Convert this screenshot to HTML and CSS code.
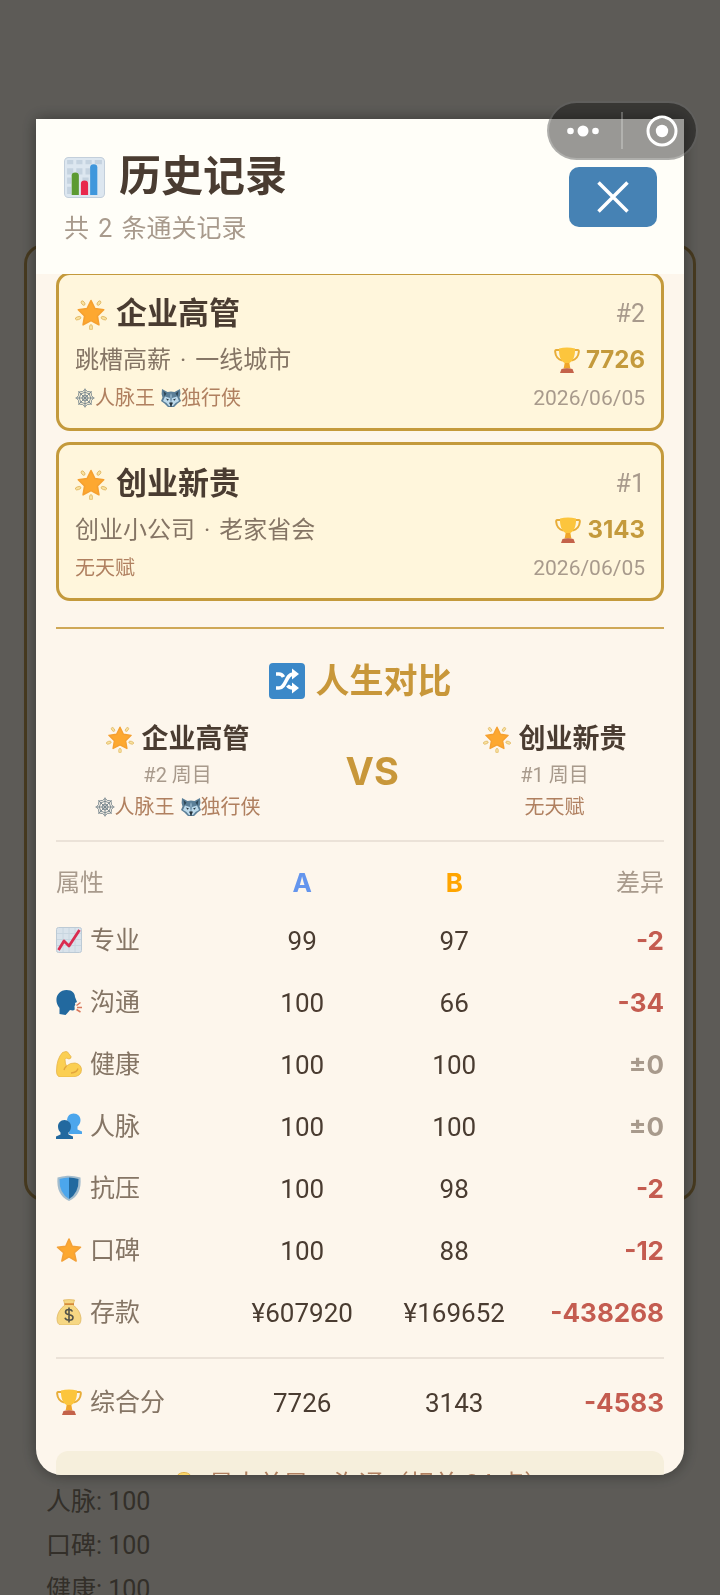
FILE: index.html
```
<!DOCTYPE html>
<html lang="zh-CN">

<head>
     <meta charset="UTF-8">
     <meta name="viewport" content="width=device-width, initial-scale=1.0">
     <title>历史记录</title>
     <link rel="stylesheet" href="styles.css">
</head>

<body>
     <!-- 图标 -->
     <svg class="sprite" aria-hidden="true">
          <symbol id="i-chart" viewBox="0 0 40 40">
               <rect x="0.5" y="0.5" width="39" height="39" rx="4" fill="#dde7f0" stroke="#c3cfdb" />
               <path d="M3 3h6v4H3zM12 3h6v4h-6zM21 3h6v4h-6zM30 3h7v4h-7zM3 11h6v6H3zM12 11h6v6h-6zM21 11h6v6h-6zM3 20h4v6H3zM18 20h6v4h-6zM3 29h4v7H3z" fill="#c5d3e0" />
               <path d="M7.500 37V18q0-3 3.500-3t3.500 3v19z" fill="#5c9a32" />
               <path d="M16.500 37V26q0-3 3.500-3t3.500 3v11z" fill="#e8294c" />
               <path d="M25.500 37V10q0-3 3.500-3t3.500 3v27z" fill="#3f97dc" />
          </symbol>
          <symbol id="i-glow" viewBox="0 0 32 32">
               <g fill="#f9e2a0" stroke="#dfb45c" stroke-width="0.8">
                    <ellipse cx="16" cy="2.500" rx="1.500" ry="2.500" transform="rotate(36 16 16)" />
                    <ellipse cx="16" cy="2.500" rx="1.500" ry="2.900" transform="rotate(108 16 16)" />
                    <ellipse cx="16" cy="2.500" rx="1.500" ry="2.900" transform="rotate(180 16 16)" />
                    <ellipse cx="16" cy="2.500" rx="1.500" ry="2.900" transform="rotate(252 16 16)" />
                    <ellipse cx="16" cy="2.500" rx="1.500" ry="2.500" transform="rotate(324 16 16)" />
               </g>
               <path d="M16 2.500l3.900 8 8.800 1.300-6.300 6.200 1.500 8.800-7.900-4.200-7.900 4.200 1.500-8.800-6.300-6.200 8.800-1.300z" fill="#fda830" stroke="#f5a030" stroke-width="1.600" stroke-linejoin="round" />
          </symbol>
          <symbol id="i-star" viewBox="0 0 26 26">
               <path d="M13 2l3.200 7.300 8.300.9-6.200 5.500 1.800 8.300L13 19.900 5.900 24l1.800-8.300L1.500 10.200l8.300-.9z" fill="#fda830" stroke="#f3a138" stroke-width="1.600" stroke-linejoin="round" />
          </symbol>
          <symbol id="i-cup" viewBox="0 0 26 26">
               <path d="M6.500 3H2.200q-1.200 0-1 2c.4 5 2.800 7.500 7.300 8.500M19.500 3h4.300q1.200 0 1 2c-.4 5-2.800 7.500-7.300 8.500" fill="none" stroke="#e8ad38" stroke-width="2" />
               <path d="M5 1.500q8-2 16 0c.3 7-1.500 12-5.500 14.500v4h-5v-4C6.500 13.500 4.700 8.500 5 1.500z" fill="#fcc53d" />
               <path d="M11 16h4l1.500 5.500h-7z" fill="#f0a52c" />
               <path d="M7.500 22q5.500-1.600 11 0l1.500 4H6z" fill="#c4624a" />
          </symbol>
          <symbol id="i-web" viewBox="0 0 20 20">
               <g fill="none" stroke="#73828a" stroke-width="0.9">
                    <path d="M10 0.500v19M0.500 10h19M3.300 3.300l13.400 13.400M16.700 3.300L3.300 16.700" />
                    <path d="M10 1.500l2.500 2 3.500.5.500 3.500 2 2.500-2 2.500-.5 3.500-3.500.5-2.500 2-2.500-2-3.500-.5-.5-3.500-2-2.500 2-2.500.5-3.500 3.500-.5z" />
                    <path d="M10 4.200l4.100 1.700 1.700 4.100-1.700 4.100-4.100 1.700-4.100-1.700L4.200 10l1.700-4.100z" />
                    <path d="M10 7l2.100.9L13 10l-.9 2.100-2.100.9-2.100-.9L7 10l.9-2.100z" />
               </g>
          </symbol>
          <symbol id="i-wolf" viewBox="0 0 20 20">
               <path d="M1 1l5.500 3q3.500-1 7 0L19 1q1 5-.5 8.500L20 13l-3.500 2.500L13 19H7l-3.500-3.500L0 13l1.500-3.500Q0 6 1 1z" fill="#5b7f98" />
               <path d="M2.500 3l3 2.500-2 3zM17.500 3l-3 2.500 2 3z" fill="#2f4858" />
               <path d="M10 5.500l1.200 4.500 4.800-1.500 2 4.500-3.500 2-2.500 3h-4l-2.500-3L2 13l2-4.500L8.800 10z" fill="#bcd9ea" />
               <path d="M10 4.500l1.200 6.500-1.200 4-1.200-4z" fill="#7d9fb6" />
               <path d="M5 10.500l3 1-1.500 1.200zM15 10.500l-3 1 1.500 1.200z" fill="#21323e" />
               <path d="M8 14.800q2-1 4 0L10.800 17v1.500H9.200V17z" fill="#26343d" />
          </symbol>
          <symbol id="i-shuffle" viewBox="0 0 36 36">
               <rect width="36" height="36" rx="4" fill="#3b88c8" />
               <path d="M7 11h3q3 0 4.500 3M7 25h3c7 0 7-14 14-14h1M18.500 22.500Q20.500 25 24 25h1" fill="none" stroke="#fff" stroke-width="3.600" />
               <path d="M23 5.500L30 11l-7 5.500zM23 19.500L30 25l-7 5.500z" fill="#fff" />
          </symbol>
          <symbol id="i-trend" viewBox="0 0 26 26">
               <rect x="0.500" y="0.500" width="25" height="25" rx="2" fill="#d9e3eb" stroke="#bccad5" />
               <path d="M1 6.500h24M1 12.500h24M1 18.500h24M7 1v24M13 1v24M19 1v24" stroke="#c8d6e0" />
               <path d="M2.500 23l5.500-9 5 5L23.500 3" fill="none" stroke="#da2c50" stroke-width="2.800" stroke-linejoin="round" />
          </symbol>
          <symbol id="i-speak" viewBox="0 0 26 26">
               <path d="M10.500 1c6 0 8.500 3.500 8.500 7l2 5-2 1 .3 2-.8 1 .2 3.500q-1.200 1.500-4.700.5L11 24.500 9.500 26l-6-1V19C-3 11 1.500 1 10.500 1z" fill="#22699f" />
               <path d="M20.500 16.500l4-3M21 18.500h5M20.500 20.500l4 2.500" stroke="#d9785c" stroke-width="1.500" />
          </symbol>
          <symbol id="i-arm" viewBox="0 0 26 26">
               <path d="M6.500 1.500L10 .5q2 0 3 2.500l2 2.500q.5 2-2 2.500L10.500 7 9 8.500q0 4 1.500 6.500 4-3.500 8.500-3 6 1 6.500 6.500Q25.500 26 15 26H5q-4.500 0-4.500-6Q.5 8 6.500 1.500z" fill="#fbcf52" stroke="#e6b448" stroke-width="0.800" />
               <path d="M15 22q6-.5 7-4.500M10.500 15q-2 2-2.500 4" fill="none" stroke="#e2a53c" stroke-width="1.300" />
          </symbol>
          <symbol id="i-people" viewBox="0 0 26 26">
               <path d="M17.500 0.500c4.500 0 7 3 7 6.500 0 3-1.200 5-3 6.500v3l4.500 2V21H13V9q-2-1-2-2.500 1-6 6.500-6z" fill="#4ca6ec" />
               <path d="M8.500 7c4 0 6.500 3 6.500 6.500 0 2.500-1 4.500-2.500 6v2l4.500 2V26H0v-2.500l4.500-2v-2C3 18 2 16 2 13.500 2 10 4.500 7 8.500 7z" fill="#22699f" />
          </symbol>
          <symbol id="i-shield" viewBox="0 0 26 26">
               <path d="M13 0.800Q18 0.800 24.500 2.500C25.500 14 22 22 13 26 4 22 .5 14 1.500 2.500 8 .8 13 .8 13 .8z" fill="#a3bccd" />
               <path d="M13 2.500Q8 2.500 3.500 4 3 18 13 24z" fill="#4ca6ec" />
               <path d="M13 2.500Q18 2.500 22.500 4 23 18 13 24z" fill="#22699f" />
          </symbol>
          <symbol id="i-bag" viewBox="0 0 26 26">
               <path d="M7.500 1q5.500-.8 11 0L17 6q7 5 8 13 0 7-4 7H5q-4 0-4-7Q2 11 9 6z" fill="#f6d783" stroke="#dfb762" stroke-width="0.800" />
               <path d="M8.500 4.300h9.500v1.800H8.500z" fill="#d58a3a" />
               <path d="M16.500 12.500q-1-2-3.500-2-3.500 0-3.500 2.600c0 4 7.500 1.500 7.500 5.300 0 3.800-7 3.500-8 .3M13 8.500v15" fill="none" stroke="#54544a" stroke-width="1.600" />
          </symbol>
          <symbol id="i-bulb" viewBox="0 0 26 26">
               <path d="M13 0.500c5 0 8.500 3.500 8.500 8 0 5-4 6-4.500 11H9c-.5-5-4.500-6-4.500-11 0-4.500 3.500-8 8.500-8z" fill="#fbd86a" stroke="#e3b24a" />
               <path d="M9 20h8v4l-2 2h-4l-2-2z" fill="#9aa8b2" />
          </symbol>
     </svg>

     <main class="page">
          <section class="result"></section>
          <ul class="stats">
               <li>人脉: 100</li>
               <li>口碑: 100</li>
               <li>健康: 100</li>
          </ul>
     </main>

     <div class="mask">
          <div class="modal" role="dialog" aria-labelledby="title">
               <header class="head">
                    <div>
                         <h1 id="title"><svg class="icon"><use href="#i-chart" /></svg>历史记录</h1>
                         <p>共 <span class="gap">2</span> 条通关记录</p>
                    </div>
                    <button class="close" type="button" aria-label="关闭">
                         <svg viewBox="0 0 32 32"><path d="M1.500 1.500l29 29M30.500 1.500l-29 29" /></svg>
                    </button>
               </header>

               <div class="body">
                    <div class="list">
                         <article class="card">
                              <div class="row name">
                                   <h2><svg class="icon"><use href="#i-glow" /></svg>企业高管</h2>
                                   <span class="no">#2</span>
                              </div>
                              <div class="row path">
                                   <span>跳槽高薪 <span class="gap">·</span> 一线城市</span>
                                   <strong class="score"><svg class="icon"><use href="#i-cup" /></svg>7726</strong>
                              </div>
                              <div class="row extra">
                                   <span class="talent"><span><svg class="icon"><use href="#i-web" /></svg>人脉王</span> <span><svg class="icon"><use href="#i-wolf" /></svg>独行侠</span></span>
                                   <time datetime="2026-06-05">2026/06/05</time>
                              </div>
                         </article>
                         <article class="card">
                              <div class="row name">
                                   <h2><svg class="icon"><use href="#i-glow" /></svg>创业新贵</h2>
                                   <span class="no">#1</span>
                              </div>
                              <div class="row path">
                                   <span>创业小公司 <span class="gap">·</span> 老家省会</span>
                                   <strong class="score"><svg class="icon"><use href="#i-cup" /></svg>3143</strong>
                              </div>
                              <div class="row extra">
                                   <span class="talent">无天赋</span>
                                   <time datetime="2026-06-05">2026/06/05</time>
                              </div>
                         </article>
                    </div>

                    <section class="compare">
                         <h2 class="compare-title"><svg class="icon"><use href="#i-shuffle" /></svg>人生对比</h2>
                         <div class="versus">
                              <div class="side">
                                   <h3><svg class="icon"><use href="#i-glow" /></svg>企业高管</h3>
                                   <p class="round">#2 周目</p>
                                   <p class="talent"><span><svg class="icon"><use href="#i-web" /></svg>人脉王</span> <span><svg class="icon"><use href="#i-wolf" /></svg>独行侠</span></p>
                              </div>
                              <strong class="vs">VS</strong>
                              <div class="side">
                                   <h3><svg class="icon"><use href="#i-glow" /></svg>创业新贵</h3>
                                   <p class="round">#1 周目</p>
                                   <p class="talent">无天赋</p>
                              </div>
                         </div>

                         <table>
                              <thead>
                                   <tr>
                                        <th scope="col">属性</th>
                                        <th scope="col" class="a">A</th>
                                        <th scope="col" class="b">B</th>
                                        <th scope="col">差异</th>
                                   </tr>
                              </thead>
                              <tbody>
                                   <tr>
                                        <th scope="row"><svg class="icon"><use href="#i-trend" /></svg>专业</th>
                                        <td>99</td>
                                        <td>97</td>
                                        <td class="down">-2</td>
                                   </tr>
                                   <tr>
                                        <th scope="row"><svg class="icon"><use href="#i-speak" /></svg>沟通</th>
                                        <td>100</td>
                                        <td>66</td>
                                        <td class="down">-34</td>
                                   </tr>
                                   <tr>
                                        <th scope="row"><svg class="icon"><use href="#i-arm" /></svg>健康</th>
                                        <td>100</td>
                                        <td>100</td>
                                        <td class="same">±0</td>
                                   </tr>
                                   <tr>
                                        <th scope="row"><svg class="icon"><use href="#i-people" /></svg>人脉</th>
                                        <td>100</td>
                                        <td>100</td>
                                        <td class="same">±0</td>
                                   </tr>
                                   <tr>
                                        <th scope="row"><svg class="icon"><use href="#i-shield" /></svg>抗压</th>
                                        <td>100</td>
                                        <td>98</td>
                                        <td class="down">-2</td>
                                   </tr>
                                   <tr>
                                        <th scope="row"><svg class="icon"><use href="#i-star" /></svg>口碑</th>
                                        <td>100</td>
                                        <td>88</td>
                                        <td class="down">-12</td>
                                   </tr>
                                   <tr>
                                        <th scope="row"><svg class="icon"><use href="#i-bag" /></svg>存款</th>
                                        <td>¥607920</td>
                                        <td>¥169652</td>
                                        <td class="down">-438268</td>
                                   </tr>
                              </tbody>
                         </table>
                         <table class="total">
                              <tbody>
                                   <tr>
                                        <th scope="row"><svg class="icon"><use href="#i-cup" /></svg>综合分</th>
                                        <td>7726</td>
                                        <td>3143</td>
                                        <td class="down">-4583</td>
                                   </tr>
                              </tbody>
                         </table>

                         <p class="tip"><svg class="icon"><use href="#i-bulb" /></svg>最大差异：沟通（相差 34 点）</p>
                    </section>
               </div>
          </div>
     </div>

     <!-- 右上角胶囊 -->
     <div class="capsule">
          <button type="button" aria-label="更多">
               <svg viewBox="0 0 32 12" width="32" height="12">
                    <circle cx="3.500" cy="6" r="3.300" />
                    <circle cx="16" cy="6" r="5.500" />
                    <circle cx="28.500" cy="6" r="3.300" />
               </svg>
          </button>
          <button type="button" aria-label="退出">
               <svg viewBox="0 0 32 32" width="32" height="32">
                    <circle class="ring" cx="16" cy="16" r="14" />
                    <circle cx="16" cy="16" r="6.200" />
               </svg>
          </button>
     </div>
</body>

</html>
```
FILE: styles.css
```
* {
     margin: 0;
     padding: 0;
     box-sizing: border-box;
}

body {
     height: 100vh;
     overflow: hidden;
     background: #e8e4da;
     color: #4a3c31;
     font-family: Roboto, "Noto Sans CJK SC", sans-serif;
}

button {
     border: 0;
     background: none;
     cursor: pointer;
}

.sprite {
     display: none;
}

.icon {
     flex: none;
     width: 26px;
     height: 26px;
}

.gap {
     margin: 0 3px;
}

/* 底层页面 */
.page {
     padding: 244px 24px 0;
}

.result {
     height: 60vh;
     border: 3px solid #b19150;
     border-radius: 20px;
}

.stats {
     margin-top: 279px;
     padding: 0 22px;
     list-style: none;
     color: #807667;
     font-size: 25px;
     line-height: 44px;
}

/* 弹窗 */
.mask {
     position: fixed;
     inset: 0;
     display: flex;
     padding: 119px 36px 120px;
     background: rgba(0, 0, 0, 0.6);
}

.modal {
     flex: 1;
     min-width: 0;
     display: flex;
     flex-direction: column;
     border-radius: 0 0 26px 26px;
     background: #fdf6ec;
     box-shadow: 0 0 16px rgba(0, 0, 0, 0.4);
     overflow: hidden;
}

.head {
     flex: none;
     display: flex;
     justify-content: space-between;
     align-items: flex-start;
     height: 155px;
     padding: 29px 27px 0 28px;
     background: #fffef8;
}

.head h1 {
     display: flex;
     align-items: center;
     gap: 14px;
     font-size: 42px;
     line-height: 58px;
}

.head h1 .icon {
     width: 41px;
     height: 41px;
}

.head p {
     color: #a89a8c;
     font-size: 25px;
     line-height: 46px;
}

.close {
     display: flex;
     align-items: center;
     justify-content: center;
     width: 88px;
     height: 60px;
     margin-top: 19px;
     border-radius: 10px;
     background: #4682b4;
}

.close svg {
     width: 32px;
     height: 32px;
     fill: none;
     stroke: #fff;
     stroke-width: 3.5;
}

.body {
     flex: 1;
     min-height: 0;
     padding: 0 20px;
     overflow: hidden;
}

/* 记录卡片 */
.list {
     display: flex;
     flex-direction: column;
     gap: 11px;
     margin-top: -2px;
     padding-bottom: 26px;
     border-bottom: 2px solid #cfa857;
}

.card {
     display: flex;
     flex-direction: column;
     gap: 6px;
     padding: 17px 16px 16px;
     border: 3px solid #c49a3c;
     border-radius: 14px;
     background: #fff6dc;
}

.row {
     display: flex;
     justify-content: space-between;
     align-items: center;
}

.name {
     line-height: 44px;
}

.name h2 {
     display: flex;
     align-items: center;
     gap: 9px;
     font-size: 31px;
}

.name .icon {
     width: 32px;
     height: 32px;
}

.no {
     color: #a89a8c;
     font-size: 25px;
}

.path {
     color: #857565;
     font-size: 24px;
     line-height: 36px;
}

.score {
     display: flex;
     align-items: center;
     gap: 6px;
     color: #c49a3c;
     font-family: Inter, sans-serif;
}

.extra {
     color: #a89a8c;
     font-size: 21px;
     line-height: 28px;
}

.talent {
     display: flex;
     gap: 6px;
     color: #b08060;
     font-size: 20px;
}

.talent span {
     display: flex;
     align-items: center;
}

.talent .icon {
     width: 20px;
     height: 20px;
}

/* 人生对比 */
.compare-title {
     display: flex;
     align-items: center;
     justify-content: center;
     gap: 11px;
     padding-top: 26px;
     color: #c8973a;
     font-size: 34px;
     line-height: 52px;
}

.compare-title .icon {
     width: 36px;
     height: 36px;
}

.versus {
     display: grid;
     grid-template-columns: 40% 1fr 36%;
     align-items: center;
     padding: 12px 0 17px;
     border-bottom: 2px solid #ebe2d8;
     text-align: center;
}

.side h3 {
     display: flex;
     align-items: center;
     justify-content: center;
     gap: 8px;
     font-size: 27px;
     line-height: 40px;
}

.side h3 .icon {
     width: 28px;
     height: 28px;
}

.round {
     color: #a89a8c;
     font-size: 20px;
     line-height: 32px;
}

.side .talent {
     justify-content: center;
     line-height: 32px;
}

.vs {
     color: #c8973a;
     font: 700 38px Inter, sans-serif;
}

table {
     width: 100%;
     table-layout: fixed;
     border-spacing: 0;
     font-size: 26px;
     line-height: 32px;
     text-align: center;
}

tr > :nth-child(1) {
     width: 28%;
}

tr > :nth-child(2),
tr > :nth-child(3) {
     width: 25%;
}

tr > :nth-child(4) {
     width: 22%;
}

thead th {
     height: 68px;
     padding-top: 14px;
     color: #a89a8c;
     font-size: 24px;
     font-weight: 400;
}

thead .a,
thead .b {
     font-family: Inter, sans-serif;
     font-size: 26px;
     font-weight: 700;
}

thead .a {
     color: #6495ed;
}

thead .b {
     color: #ffa500;
}

tr > :first-child {
     text-align: left;
}

tr > :last-child {
     text-align: right;
}

tbody th,
tbody td {
     height: 62px;
}

tbody th {
     color: #857565;
     font-size: 25px;
     font-weight: 400;
}

tbody th .icon {
     margin-right: 8px;
     vertical-align: -4px;
}

.down,
.same {
     font-family: Inter, sans-serif;
     font-weight: 700;
}

.down {
     color: #c45c50;
}

.same {
     color: #a89a8c;
}

.total {
     margin-top: 13px;
     border-top: 2px solid #ebe2d8;
}

.total th,
.total td {
     height: 88px;
}

.tip {
     display: flex;
     align-items: center;
     justify-content: center;
     gap: 12px;
     margin-top: 4px;
     padding: 16px 20px;
     border-radius: 12px;
     background: #f6efdc;
     color: #b08060;
     font-size: 25px;
     line-height: 36px;
}

/* 胶囊按钮 */
.capsule {
     position: fixed;
     top: 101px;
     right: 22px;
     display: flex;
     width: 151px;
     height: 59px;
     border: 2px solid rgba(255, 255, 255, 0.2);
     border-radius: 30px;
     background: rgba(0, 0, 0, 0.4);
}

.capsule button {
     display: flex;
     align-items: center;
     justify-content: center;
     width: 72px;
     padding-right: 4px;
}

.capsule button + button {
     flex: 1;
     padding: 0 0 0 4px;
     border-left: 2px solid rgba(255, 255, 255, 0.25);
     margin: 9px 0;
}

.capsule svg {
     fill: #fff;
}

.capsule .ring {
     fill: none;
     stroke: #fff;
     stroke-width: 3;
}
```
